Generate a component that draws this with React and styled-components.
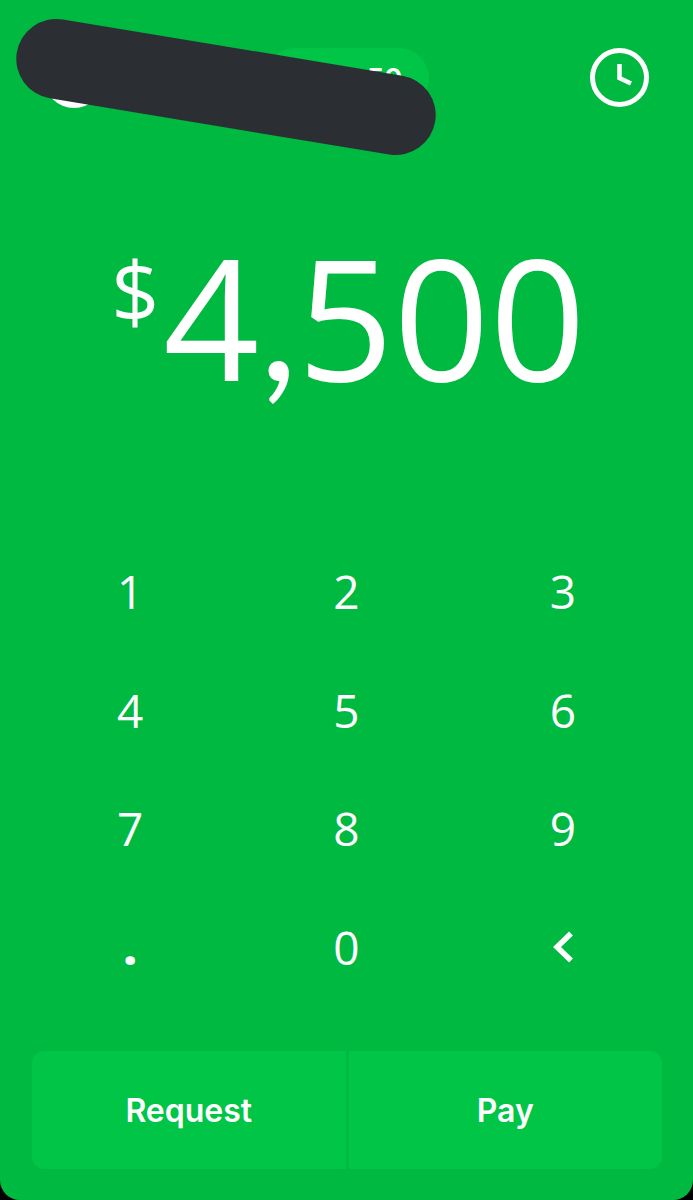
import styled, { createGlobalStyle } from "styled-components";

const keys = ["1", "2", "3", "4", "5", "6", "7", "8", "9", ".", "0"];

const App = () => {
  return (
    <>
      <GlobalStyle />
      <Screen>
        <Header>
          <Avatar type="button" aria-label="Profile" />
          <Balance type="button" aria-label="Balance">
            50
          </Balance>
          <IconButton type="button" aria-label="Activity">
            <svg width="60" height="60" viewBox="0 0 60 60" fill="none">
              <circle cx="30.500" cy="29.500" r="27" stroke="#fff" strokeWidth="5" />
              <path d="M30.500 16v14l11.500 5.500" stroke="#fff" strokeWidth="4.500" />
            </svg>
          </IconButton>
          <Marker />
        </Header>

        <Amount>
          <Currency>$</Currency>
          <span>
            4<Separator>,</Separator>500
          </span>
        </Amount>

        <Keypad>
          {keys.map((key) => (
            <Key type="button" key={key} $bold={key === "."}>
              {key}
            </Key>
          ))}
          <Key type="button" aria-label="Delete">
            <svg width="24" height="34" viewBox="0 0 24 34" fill="none">
              <path d="M20 3.500 6 17 20 30.500" stroke="#fff" strokeWidth="5.500" />
            </svg>
          </Key>
        </Keypad>

        <Actions>
          <Action type="button">Request</Action>
          <Action type="button">Pay</Action>
        </Actions>
      </Screen>
    </>
  );
};

const GlobalStyle = createGlobalStyle`
  * {
    box-sizing: border-box;
  }
  body {
    margin: 0;
    background-color: #000;
  }
  button {
    margin: 0;
    padding: 0;
    border: none;
    background: none;
    color: #fff;
    cursor: pointer;
  }
  svg {
    display: block;
  }
`;

const Screen = styled.main`
  min-height: 100vh;
  display: flex;
  flex-direction: column;
  background-color: #00b940;
  border-radius: 0 0 20px 20px;
  color: #fff;
`;

const Header = styled.header`
  position: relative;
  display: flex;
  justify-content: space-between;
  align-items: center;
  padding: 48px 44px 0;
`;

const Avatar = styled.button`
  width: 60px;
  height: 60px;
  border-radius: 50%;
  background-color: #fff;
`;

const Balance = styled.button`
  width: 164px;
  height: 60px;
  padding-right: 26px;
  border-radius: 30px;
  background-color: #00c546;
  font: 600 28px/62px "Inter", sans-serif;
  text-align: right;
`;

const IconButton = styled.button`
  width: 60px;
  height: 60px;
`;

/* dark stroke lying over the avatar and the balance */
const Marker = styled.div`
  position: absolute;
  top: 47px;
  left: 14px;
  width: 424px;
  height: 80px;
  border-radius: 40px;
  background-color: #2b2f33;
  transform: rotate(9.4deg);
`;

const Amount = styled.h1`
  display: flex;
  justify-content: center;
  align-items: flex-start;
  gap: 4px;
  margin: 108px 0 0;
  padding-left: 4px;
  font: 385 168px/200px "Open Sans", sans-serif;
`;

const Currency = styled.span`
  padding-top: 30px;
  font-size: 84px;
  line-height: 90px;
`;

const Separator = styled.span`
  font-family: "Lato", sans-serif;
  line-height: 1;
`;

const Keypad = styled.section`
  flex: 1;
  display: grid;
  grid-template-columns: repeat(3, 1fr);
  grid-auto-rows: 1fr;
  margin: 116px 22px 45px;
`;

const Key = styled.button`
  display: flex;
  justify-content: center;
  align-items: center;
  font: ${({ $bold }) => ($bold ? 800 : 440)} 46px/60px "Open Sans", sans-serif;
`;

const Actions = styled.footer`
  display: grid;
  grid-template-columns: 1fr 1fr;
  gap: 3px;
  margin: 0 31px 31px 32px;
  border-radius: 12px;
  overflow: hidden;
`;

const Action = styled.button`
  height: 118px;
  padding-top: 2px;
  background-color: #00c546;
  font: 600 32px/42px "Inter", sans-serif;
`;

export default App;
